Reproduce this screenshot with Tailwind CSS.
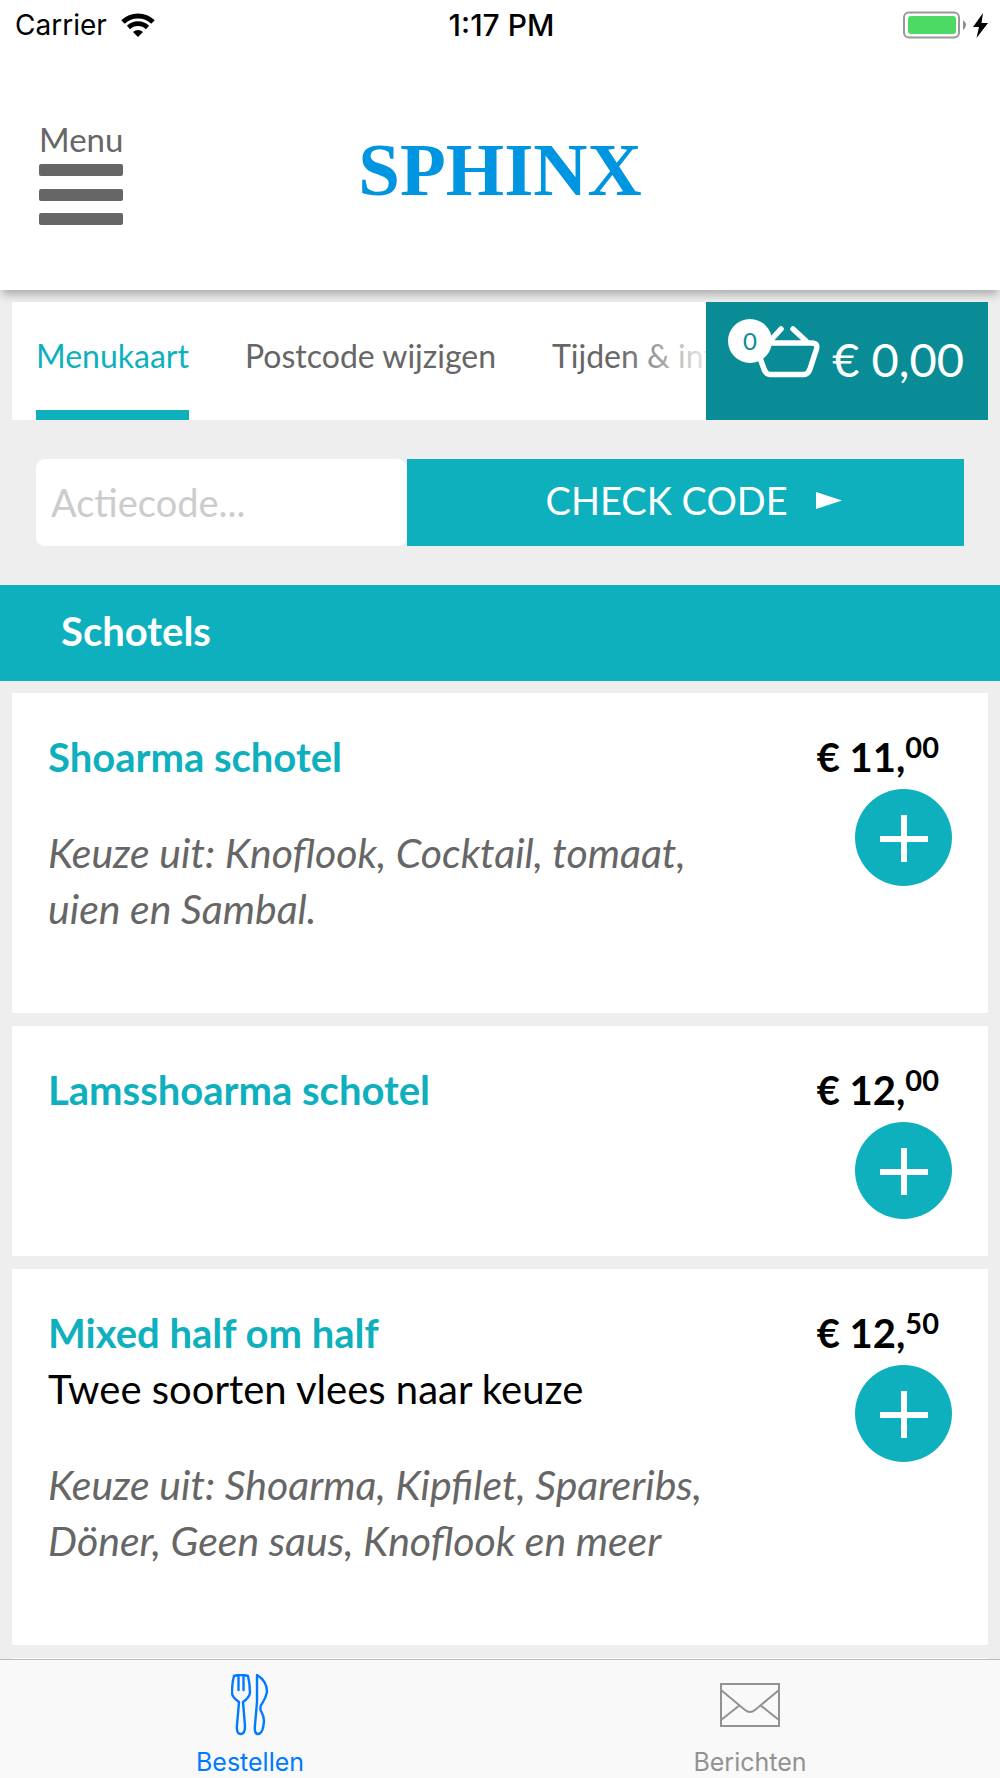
<!DOCTYPE html>
<html lang="nl">
<head>
<meta charset="utf-8">
<meta name="viewport" content="width=device-width, initial-scale=1">
<title>Sphinx</title>
<script src="https://cdn.jsdelivr.net/npm/@tailwindcss/browser@4"></script>
</head>
<body class="flex min-h-screen flex-col bg-[#eeeeee] font-['Lato',sans-serif] text-[#666666]">
  <header class="bg-white shadow-[0_7px_8px_-2px_rgba(0,0,0,0.26)]">
    <div class="grid h-[50px] grid-cols-3 items-center pl-[15px] pr-3 font-['Inter',sans-serif] text-[28px] leading-8 text-black">
      <div class="flex items-center gap-[14px]">
        <span>Carrier</span>
        <svg class="h-6 w-[34px]" viewBox="0 0 34 24" fill="none" aria-label="Wifi">
          <path d="M2 9A21.5 21.5 0 0 1 32 9" stroke="#000" stroke-width="5"/>
          <path d="M7.500 14.500A13.500 13.500 0 0 1 26.500 14.500" stroke="#000" stroke-width="4.600"/>
          <path d="M12 19A7.500 7.500 0 0 1 22 19L17 24Z" fill="#000"/>
        </svg>
      </div>
      <span class="text-center text-[30px] font-medium">1:17 PM</span>
      <svg class="h-7 w-[85px] justify-self-end" viewBox="0 0 85 28" aria-label="Batterij">
        <rect x="1" y="1.500" width="55" height="25" rx="5" fill="none" stroke="#999" stroke-width="2"/>
        <rect x="5" y="5" width="48" height="18" rx="3" fill="#4cd964"/>
        <path d="M60 9Q66 14 60 19Z" fill="#8e8e8e"/>
        <path d="M80 2L70 16H76L73.500 27L85 12H78.500Z" fill="#000"/>
      </svg>
    </div>
    <div class="grid h-60 grid-cols-3 items-center px-9">
      <button type="button" class="flex w-24 flex-col items-start pt-1 pl-[3px]">
        <span class="text-[33px] leading-10">Menu</span>
        <svg class="mt-[5px] h-[61px] w-[85px]" viewBox="0 0 85 61" fill="#666" aria-hidden="true">
          <rect width="84" height="12" rx="2"/><rect y="25" width="84" height="12" rx="2"/><rect y="49" width="84" height="12" rx="2"/>
        </svg>
      </button>
      <h1 class="text-center font-['Liberation_Serif',serif] text-[75px] leading-[80px] font-bold text-[#0095e0]">SPHINX</h1>
    </div>
  </header>

  <main class="relative flex-1 pt-3">
    <div class="mx-3 flex h-[118px] bg-white">
      <nav class="relative flex min-w-0 flex-1 gap-14 overflow-hidden pl-6 text-[32px] leading-[44px] whitespace-nowrap">
        <a href="#menukaart" class="border-b-[10px] border-[#0eb0be] pt-8 text-[#0eb0be]">Menukaart</a>
        <a href="#postcode" class="pt-8">Postcode wijzigen</a>
        <a href="#tijden" class="pt-8">Tijden &amp; info</a>
        <div class="absolute inset-y-0 right-0 w-[88px] bg-linear-to-l from-white/85 to-white/0"></div>
      </nav>
      <button type="button" class="flex w-[282px] items-center justify-between bg-[#0a8c96] pl-[22px] pr-6 text-white">
        <span class="relative h-[84px] w-[93px]">
          <svg class="h-full w-full" viewBox="0 0 93 84" fill="none" stroke="#fff" stroke-width="5.500" stroke-linecap="round" stroke-linejoin="round" aria-hidden="true">
            <path d="M31 24H84Q90 24 88.500 30L82 50Q80 55.500 76 55.500H42Q38 55.500 36 50L28 28Q27 24 31 24ZM42 22L53 10M65 10L78 22"/>
          </svg>
          <span class="absolute top-0 left-0 flex size-11 items-center justify-center rounded-full bg-white text-2xl text-[#0a8c96]">0</span>
        </span>
        <span class="pb-1 text-[47px] leading-[54px]">€ 0,00</span>
      </button>
    </div>

    <form class="mx-9 my-[39px] flex h-[87px]">
      <input type="text" aria-label="Actiecode" placeholder="Actiecode..." class="w-2/5 rounded-[9px] bg-white px-[15px] text-[38px] placeholder:text-[#cccccc]">
      <button type="button" class="flex flex-1 items-center justify-center gap-7 bg-[#0eb0be] pb-1 pl-4 text-[38px] text-white">
        <span>CHECK CODE</span>
        <svg class="h-[17px] w-[26px]" viewBox="0 0 26 17" fill="#fff" aria-hidden="true"><path d="M0 0L26 8.500L0 17Z"/></svg>
      </button>
    </form>

    <h2 class="bg-[#0eb0be] px-[61px] pt-[18px] pb-[22px] text-[40px] leading-[56px] font-bold text-white">Schotels</h2>

    <div class="mx-3 mt-3 flex flex-col gap-[13px] text-[40px] leading-[56px]">
      <article class="flex justify-between bg-white p-9">
        <div class="flex w-[700px] flex-col gap-10 pb-10">
          <h3 class="font-bold text-[#0eb0be]">Shoarma schotel</h3>
          <p class="text-[41px] italic">Keuze uit: Knoflook, Cocktail, tomaat,<br>uien en Sambal.</p>
        </div>
        <div class="flex flex-col items-end gap-1">
          <p class="flex pr-[13px] font-bold text-black"><span>€ 11,</span><span class="text-[29px] leading-9">00</span></p>
          <button type="button" aria-label="Shoarma schotel toevoegen" class="flex size-[97px] items-center justify-center rounded-full bg-[#0eb0be]">
            <svg class="size-12" viewBox="0 0 48 48" stroke="#fff" stroke-width="6" aria-hidden="true"><path d="M0 25H48M24 1V48"/></svg>
          </button>
        </div>
      </article>
      <article class="flex justify-between bg-white p-9 pb-[37px]">
        <h3 class="font-bold text-[#0eb0be]">Lamsshoarma schotel</h3>
        <div class="flex flex-col items-end gap-1">
          <p class="flex pr-[13px] font-bold text-black"><span>€ 12,</span><span class="text-[29px] leading-9">00</span></p>
          <button type="button" aria-label="Lamsshoarma schotel toevoegen" class="flex size-[97px] items-center justify-center rounded-full bg-[#0eb0be]">
            <svg class="size-12" viewBox="0 0 48 48" stroke="#fff" stroke-width="6" aria-hidden="true"><path d="M0 25H48M24 1V48"/></svg>
          </button>
        </div>
      </article>
      <article class="flex justify-between bg-white p-9">
        <div class="flex w-[700px] flex-col gap-10 pb-10">
          <div>
            <h3 class="font-bold text-[#0eb0be]">Mixed half om half</h3>
            <p class="text-black">Twee soorten vlees naar keuze</p>
          </div>
          <p class="text-[41px] italic">Keuze uit: Shoarma, Kipfilet, Spareribs,<br>Döner, Geen saus, Knoflook en meer</p>
        </div>
        <div class="flex flex-col items-end gap-1">
          <p class="flex pr-[13px] font-bold text-black"><span>€ 12,</span><span class="text-[29px] leading-9">50</span></p>
          <button type="button" aria-label="Mixed half om half toevoegen" class="flex size-[97px] items-center justify-center rounded-full bg-[#0eb0be]">
            <svg class="size-12" viewBox="0 0 48 48" stroke="#fff" stroke-width="6" aria-hidden="true"><path d="M0 25H48M24 1V48"/></svg>
          </button>
        </div>
      </article>
      <div class="h-px bg-white"></div>
    </div>
  </main>

  <footer class="sticky bottom-0 grid h-[119px] grid-cols-2 border-t border-[#bbbbbb] bg-[#f9f9f9] font-['Inter',sans-serif] text-[25px] leading-8">
    <a href="#bestellen" class="flex flex-col items-center justify-end text-[#007aff]">
      <svg class="mb-[10px] h-[62px] w-[38px]" viewBox="0 0 38 62" fill="none" stroke="currentColor" stroke-width="2.400" stroke-linejoin="round" stroke-linecap="round" aria-hidden="true">
        <path d="M3 2Q10 0 17 2Q19 10 19 19Q18 24 12 28L14 52Q14 60 10 60Q5 60 6 51L8 28Q1 23 1 19Q1 9 3 2ZM7.500 2V16M12.500 2V16"/>
        <path d="M26 1Q36 7 36 18Q35 23 32 28Q28 33 30 37Q33 42 33 47Q32 60 27 60Q23 60 24 51L26 28Z"/>
      </svg>
      <span>Bestellen</span>
    </a>
    <a href="#berichten" class="flex flex-col items-center justify-end text-[#929292]">
      <svg class="mb-[19px] h-11 w-[60px]" viewBox="0 0 60 44" fill="none" stroke="currentColor" stroke-width="2" aria-hidden="true">
        <path d="M1 1H59V43H1ZM1 7L25 27Q30 31 35 27L59 7M1 37L20 22M59 37L40 22"/>
      </svg>
      <span>Berichten</span>
    </a>
  </footer>
</body>
</html>
